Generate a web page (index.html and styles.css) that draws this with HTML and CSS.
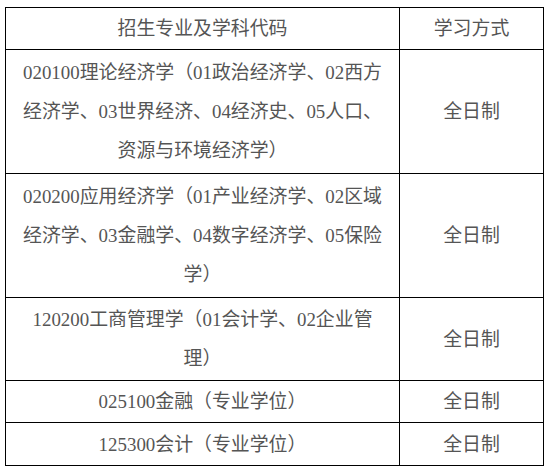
FILE: index.html
```html
<!DOCTYPE html>
<html lang="zh-CN">
<head>
<meta charset="utf-8">
<link rel="stylesheet" href="styles.css">
</head>
<body>
<table class="majors">
  <colgroup>
    <col class="col-name">
    <col class="col-mode">
  </colgroup>
  <tr class="row-head">
    <td>招生专业及学科代码</td>
    <td>学习方式</td>
  </tr>
  <tr class="row-3">
    <td>020100理论经济学（01政治经济学、02西方经济学、03世界经济、04经济史、05人口、资源与环境经济学）</td>
    <td>全日制</td>
  </tr>
  <tr class="row-3">
    <td>020200应用经济学（01产业经济学、02区域经济学、03金融学、04数字经济学、05保险学）</td>
    <td>全日制</td>
  </tr>
  <tr class="row-2">
    <td>120200工商管理学（01会计学、02企业管理）</td>
    <td>全日制</td>
  </tr>
  <tr class="row-1">
    <td>025100金融（专业学位）</td>
    <td>全日制</td>
  </tr>
  <tr class="row-1b">
    <td>125300会计（专业学位）</td>
    <td>全日制</td>
  </tr>
</table>
</body>
</html>
```
FILE: styles.css
```css
html, body {
  margin: 0;
  padding: 0;
  background: #fff;
}
body {
  padding: 7px 0 0 5px;
}
.majors {
  border-collapse: collapse;
  table-layout: fixed;
  width: 538px;
  font-family: "Liberation Serif", "Noto Sans CJK SC", serif;
  font-size: 18.9px;
  color: #555;
}
.col-name { width: 394px; }
.col-mode { width: 144px; }
.majors td {
  border: 1px solid #000;
  text-align: center;
  vertical-align: middle;
  line-height: 39px;
  padding: 0 16px;
}
.row-head { height: 42px; }
.row-3 { height: 124px; }
.row-2 { height: 83px; }
.row-1 { height: 42px; }
.row-1b { height: 43px; }
```
